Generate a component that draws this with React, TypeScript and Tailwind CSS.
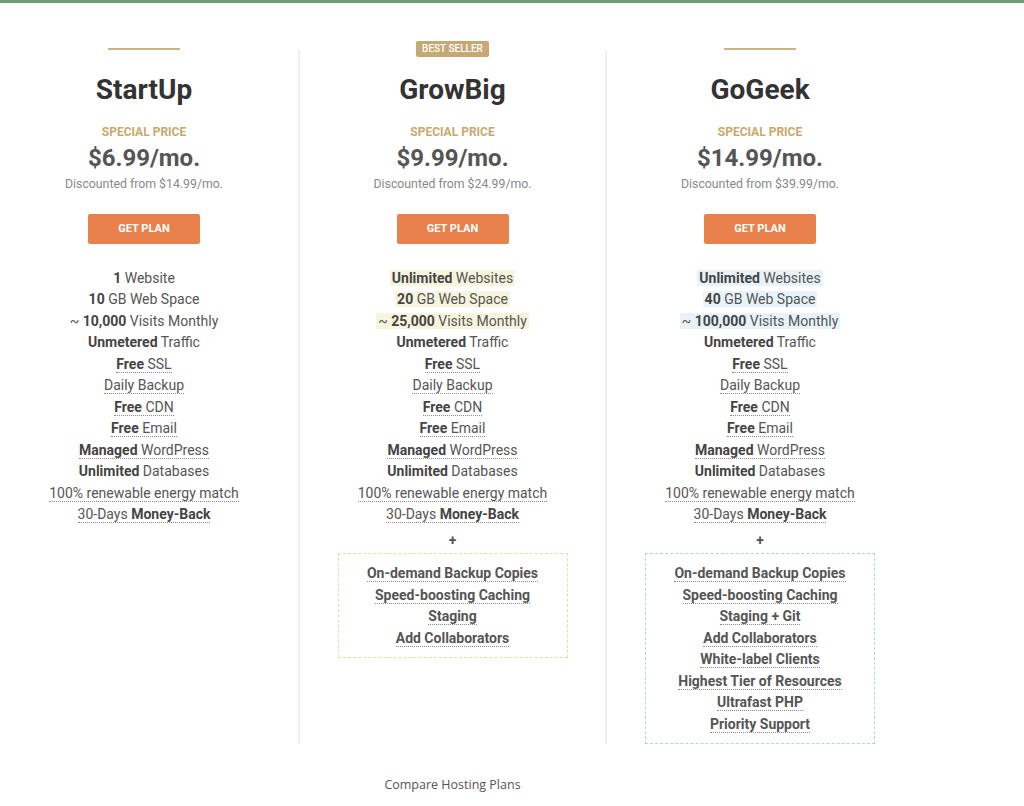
type Part = [string, boolean];
type Feature = { parts: Part[]; dotted?: boolean; hl?: boolean };

const common = (first: Feature[]): Feature[] => [
    ...first,
    { parts: [['Unmetered', true], [' Traffic', false]] },
    { parts: [['Free', true], [' SSL', false]], dotted: true },
    { parts: [['Daily Backup', false]], dotted: true },
    { parts: [['Free', true], [' CDN', false]], dotted: true },
    { parts: [['Free', true], [' Email', false]], dotted: true },
    { parts: [['Managed', true], [' WordPress', false]], dotted: true },
    { parts: [['Unlimited', true], [' Databases', false]] },
    { parts: [['100% renewable energy match', false]], dotted: true },
    { parts: [['30-Days ', false], ['Money-Back', true]], dotted: true },
];

const plans = [
    {
        name: 'StartUp',
        price: '$6.99/mo.',
        was: '$14.99/mo.',
        badge: false,
        hl: '',
        box: '',
        features: common([
            { parts: [['1', true], [' Website', false]] },
            { parts: [['10', true], [' GB Web Space', false]] },
            { parts: [['~ ', false], ['10,000', true], [' Visits Monthly', false]] },
        ]),
        extras: [] as string[],
    },
    {
        name: 'GrowBig',
        price: '$9.99/mo.',
        was: '$24.99/mo.',
        badge: true,
        hl: 'bg-[#f7f4dd]',
        box: 'border-[#ebdb9f]',
        features: common([
            { parts: [['Unlimited', true], [' Websites', false]], hl: true },
            { parts: [['20', true], [' GB Web Space', false]], hl: true },
            { parts: [['~ ', false], ['25,000', true], [' Visits Monthly', false]], hl: true },
        ]),
        extras: [
            'On-demand Backup Copies',
            'Speed-boosting Caching',
            'Staging',
            'Add Collaborators',
        ],
    },
    {
        name: 'GoGeek',
        price: '$14.99/mo.',
        was: '$39.99/mo.',
        badge: false,
        hl: 'bg-[#e7f3f8]',
        box: 'border-[#aad8e6]',
        features: common([
            { parts: [['Unlimited', true], [' Websites', false]], hl: true },
            { parts: [['40', true], [' GB Web Space', false]], hl: true },
            { parts: [['~ ', false], ['100,000', true], [' Visits Monthly', false]], hl: true },
        ]),
        extras: [
            'On-demand Backup Copies',
            'Speed-boosting Caching',
            'Staging + Git',
            'Add Collaborators',
            'White-label Clients',
            'Highest Tier of Resources',
            'Ultrafast PHP',
            'Priority Support',
        ],
    },
];

function PlanColumn({ plan, className }: { plan: (typeof plans)[number]; className: string }) {
    return (
        <div className={`flex flex-col items-center ${className}`}>
            {/* top marker */}
            <div className="flex h-[16px] items-center justify-center">
                {plan.badge ? (
                    <span className="rounded-[2px] bg-[#c6a874] px-[6px] text-[10px] leading-[16px] font-medium text-white">
                        BEST SELLER
                    </span>
                ) : (
                    <div className="h-[2px] w-[72px] bg-[#cfb07a]" />
                )}
            </div>
            <h2 className="mt-[16px] text-[28px] leading-[34px] font-bold text-[#333]">
                {plan.name}
            </h2>
            <div className="mt-[17px] text-[12px] leading-[16px] font-bold text-[#c9a96e]">
                SPECIAL PRICE
            </div>
            <div className="mt-[4px] text-[24px] leading-[28px] font-bold text-[#555]">
                {plan.price}
            </div>
            <div className="mt-[4px] text-[12.3px] leading-[16px] text-[#888]">
                Discounted from {plan.was}
            </div>
            <button
                type="button"
                className="mt-[22px] h-[30px] w-[112px] rounded-[2px] bg-[#e8814b] text-[11px] font-bold text-white"
            >
                GET PLAN
            </button>
            {/* features */}
            <ul className="mt-[23.5px] text-center text-[14px] leading-[21.5px] text-[#555]">
                {plan.features.map((f, i) => (
                    <li key={i}>
                        <span
                            className={`${f.hl ? `${plan.hl} px-[2px]` : ''} ${
                                f.dotted ? 'border-b border-dotted border-[#8a8a8a]' : ''
                            }`}
                        >
                            {f.parts.map(([t, b], j) =>
                                b ? (
                                    <b key={j} className="font-bold text-[#444]">
                                        {t}
                                    </b>
                                ) : (
                                    <span key={j}>{t}</span>
                                ),
                            )}
                        </span>
                    </li>
                ))}
            </ul>
            {plan.extras.length > 0 && (
                <>
                    <div className="mt-[4px] text-[14px] leading-[21.5px] font-bold text-[#555]">
                        +
                    </div>
                    <ul
                        className={`mt-[2px] w-[230px] border border-dashed ${plan.box} pt-[9px] pb-[8px] text-center text-[14px] leading-[21.5px] font-bold text-[#555]`}
                    >
                        {plan.extras.map((e) => (
                            <li key={e}>
                                <span className="border-b border-dotted border-[#8a8a8a]">
                                    {e}
                                </span>
                            </li>
                        ))}
                    </ul>
                </>
            )}
        </div>
    );
}

export default function App() {
    return (
        <div className="min-h-[806px] bg-white font-['Roboto',sans-serif]">
            <div className="h-[3px] bg-[#6f9b70]" />
            <div className="flex pt-[38px]">
                <PlanColumn plan={plans[0]} className="w-[298px] pr-[10px]" />
                <div className="mt-[9px] w-[2px] bg-[#efefef]" />
                <PlanColumn plan={plans[1]} className="w-[305px]" />
                <div className="mt-[9px] w-[2px] bg-[#efefef]" />
                <PlanColumn plan={plans[2]} className="w-[306px]" />
            </div>
            <div className="mt-[31px] ml-[300px] w-[305px] text-center font-['Open_Sans',sans-serif] text-[12.5px] leading-[20px] text-[#555]">
                Compare Hosting Plans
            </div>
        </div>
    );
}
